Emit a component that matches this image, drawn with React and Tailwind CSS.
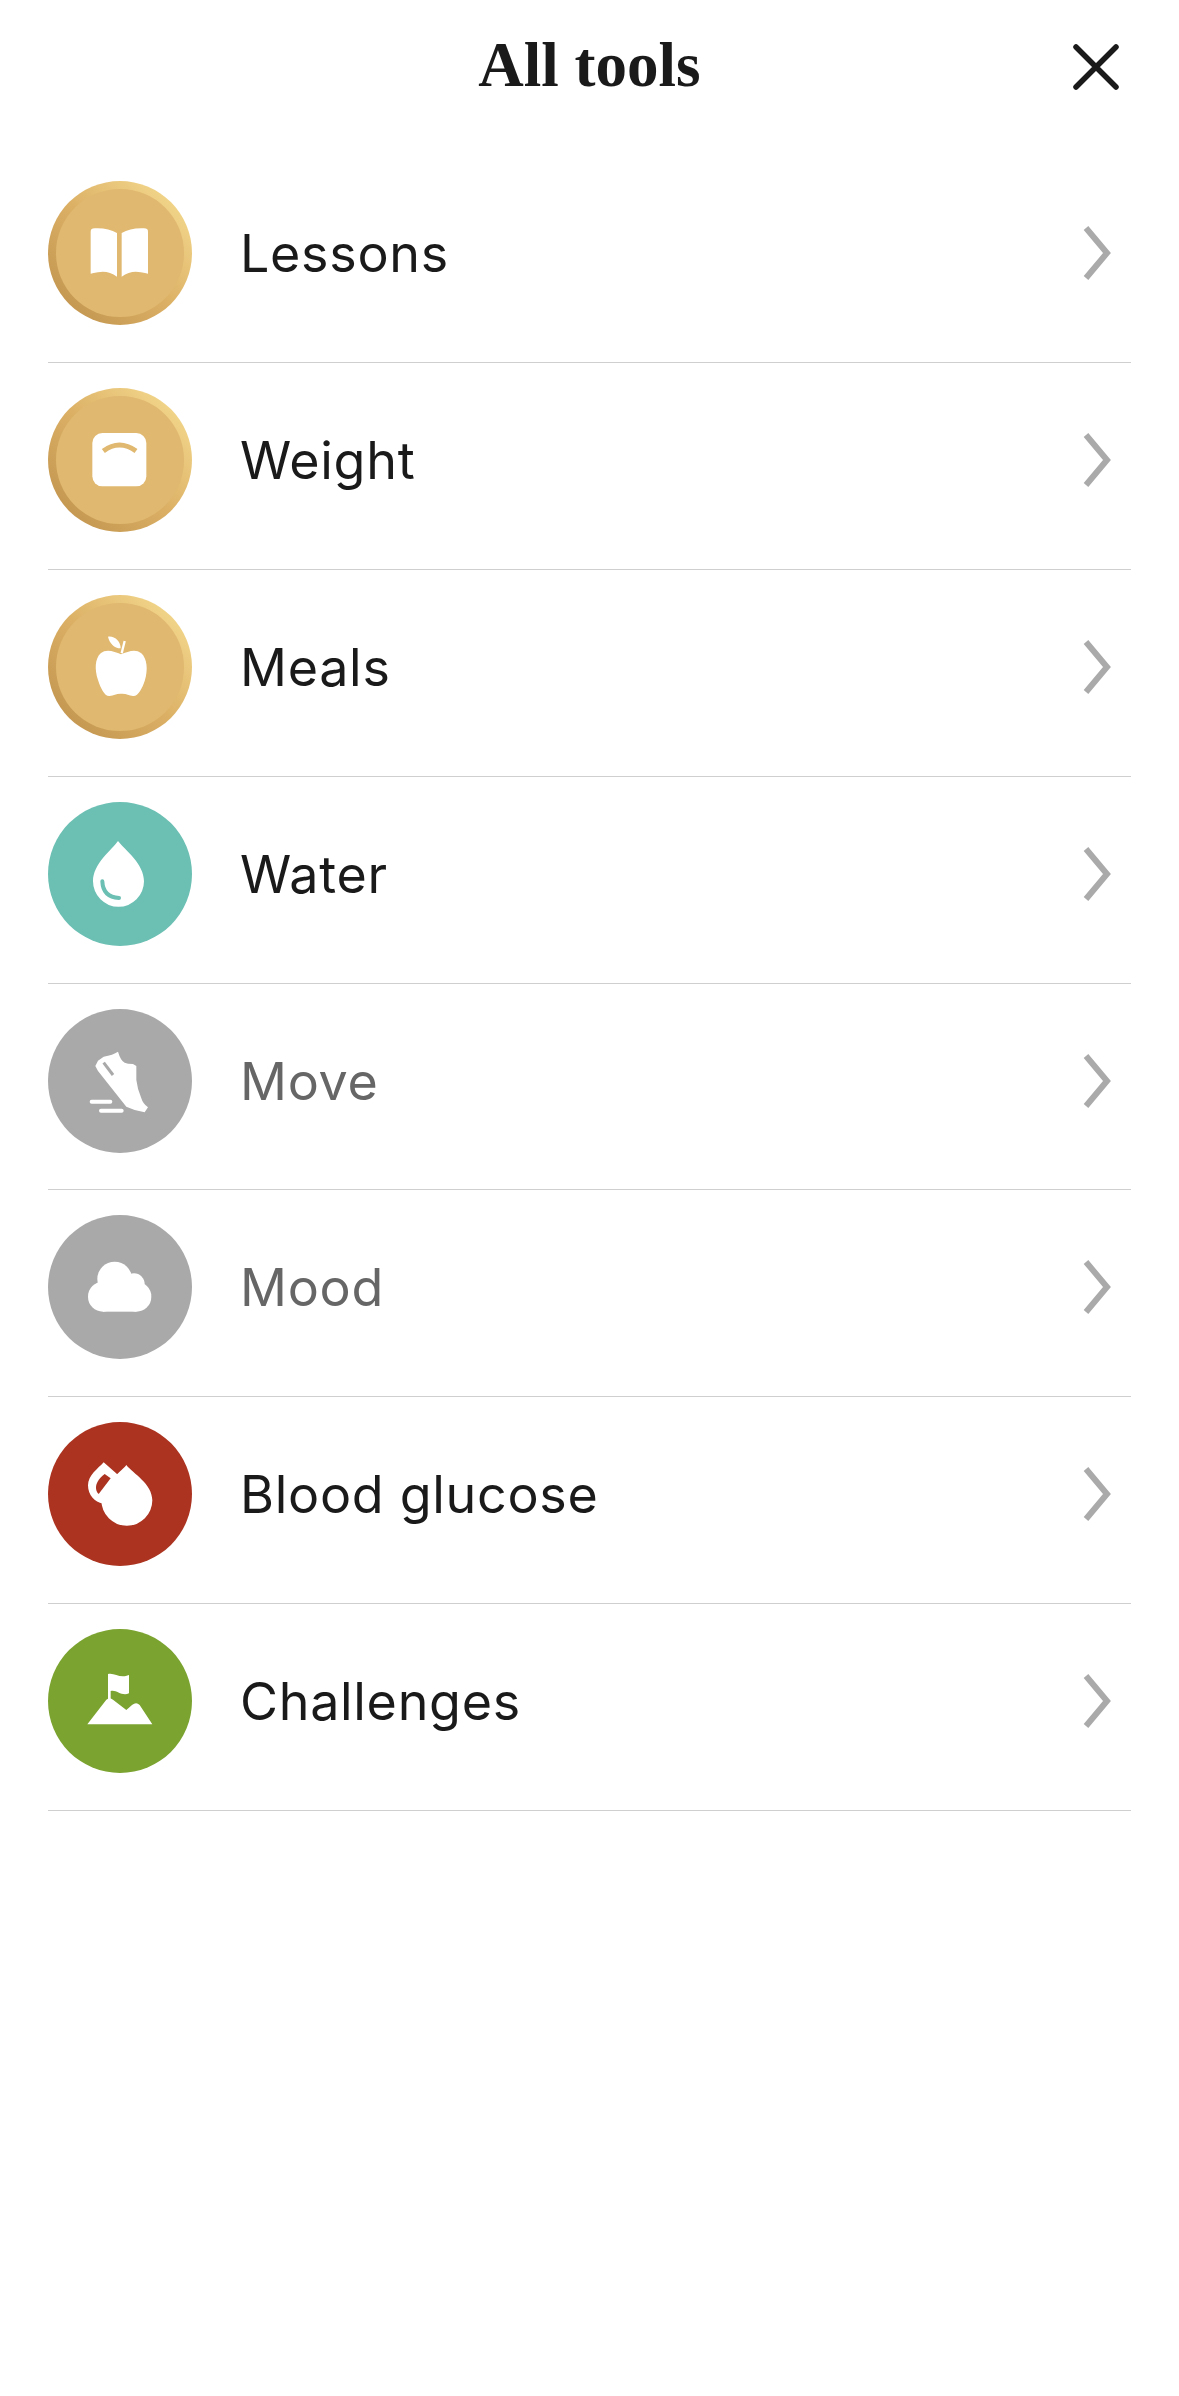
const GOLD = "#e0b86f";

// icon drawings share a 432 unit box, 3 units per pixel of the 144px circle
function BookIcon() {
  return (
    <g fill="#fff">
      <path d="M128 152 Q128 142 140 142 Q180 140 207 156 V287 Q180 268 150 274 Q135 276 128 278 Z" />
      <path d="M300 152 Q300 142 288 142 Q248 140 221 156 V287 Q248 268 278 274 Q293 276 300 278 Z" />
    </g>
  );
}

function ScaleIcon() {
  return (
    <g>
      <rect x="133" y="135" width="162" height="160" rx="30" fill="#fff" />
      <path d="M166 189 Q214 153 264 189" fill="none" stroke={GOLD} strokeWidth="15" />
    </g>
  );
}

function AppleIcon() {
  return (
    <g fill="#fff">
      <path d="M219 178 C200 170 175 160 158 175 C140 192 140 225 150 255 C158 280 170 305 185 303 C198 302 205 295 220 296 C235 295 242 302 255 303 C270 305 283 280 291 255 C300 225 298 192 280 175 C262 160 240 170 219 178 Z" />
      <path d="M180 125 C200 122 218 140 218 160 C198 160 185 145 180 125 Z" />
      <path d="M230 138 L221 175" stroke="#fff" strokeWidth="7" />
    </g>
  );
}

function DropIcon() {
  return (
    <g>
      <path d="M210 117 C190 145 135 185 135 238 A76.5 76.5 0 0 0 288 238 C288 185 232 145 210 117 Z" fill="#fff" />
      <path d="M163 238 Q165 285 213 288" fill="none" stroke="#6bbfb3" strokeWidth="12" strokeLinecap="round" />
    </g>
  );
}

function ShoeIcon() {
  return (
    <g>
      <path d="M150 155 L142 171 L150 186 L235 293 Q260 305 290 310 L300 295 Q285 285 280 268 Q268 240 265 213 L265 171 L255 165 Q238 165 230 161 Q218 155 210 128 Q195 138 167 143 Z" fill="#fff" />
      <path d="M167 161 L195 198" stroke="#a9a9a9" strokeWidth="9" />
      <path d="M131 278 H187 M159 305 H221" stroke="#fff" strokeWidth="12" strokeLinecap="round" />
    </g>
  );
}

function CloudIcon() {
  return (
    <g fill="#fff">
      <circle cx="165" cy="245" r="45" />
      <circle cx="200" cy="192" r="52" />
      <circle cx="258" cy="207" r="32" />
      <circle cx="265" cy="245" r="45" />
      <rect x="165" y="200" width="100" height="90" />
    </g>
  );
}

function GlucoseIcon() {
  return (
    <g>
      <path d="M167 121 C150 140 120 160 120 190 C120 220 140 240 165 245 L205 240 L215 170 L207 156 Z" fill="#fff" />
      <path d="M170 156 L188 169 L152 216 C140 205 138 180 170 156 Z" fill="#ab3320" />
      <path d="M235 129 C215 155 160 185 160 235 A76.5 76.5 0 0 0 313 235 C313 185 255 155 235 129 Z" fill="#fff" />
    </g>
  );
}

function FlagIcon() {
  return (
    <g fill="#fff">
      <path d="M180 135 C200 130 215 150 243 138 V193 C220 203 205 180 188 186 V212 H180 Z" />
      <path d="M118 286 L175 212 Q185 203 195 212 L235 243 L252 228 Q265 218 275 228 L313 286 Z" />
    </g>
  );
}

function IconSvg({ children }) {
  return (
    <svg viewBox="0 0 432 432" className="w-[144px] h-[144px] [grid-area:1/1]">
      {children}
    </svg>
  );
}

function ToolBadge({ gold, color, children }) {
  if (gold) {
    return (
      <div className="grid w-[144px] h-[144px] shrink-0 rounded-full bg-gradient-to-tr from-[#bd8f4a] via-[#dcb166] via-50% to-[#f9e296]">
        <div className="[grid-area:1/1] m-[8px] rounded-full bg-[#e0b86f]" />
        <IconSvg>{children}</IconSvg>
      </div>
    );
  }
  return (
    <div className={`grid w-[144px] h-[144px] shrink-0 rounded-full ${color}`}>
      <IconSvg>{children}</IconSvg>
    </div>
  );
}

const tools = [
  { label: "Lessons", gold: true, icon: <BookIcon /> },
  { label: "Weight", gold: true, icon: <ScaleIcon /> },
  { label: "Meals", gold: true, icon: <AppleIcon /> },
  { label: "Water", color: "bg-[#6bbfb3]", icon: <DropIcon /> },
  { label: "Move", color: "bg-[#a9a9a9]", muted: true, icon: <ShoeIcon /> },
  { label: "Mood", color: "bg-[#a9a9a9]", muted: true, icon: <CloudIcon /> },
  { label: "Blood glucose", color: "bg-[#ab3320]", icon: <GlucoseIcon /> },
  { label: "Challenges", color: "bg-[#7ba32f]", icon: <FlagIcon /> },
];

export default function App() {
  return (
    <div className="w-[1179px] h-[2396px] bg-white font-['Inter',sans-serif] text-[#1a1a1a]">
      {/* header */}
      <div className="grid grid-cols-[1fr_auto_1fr] items-center h-[131px] pb-[1px]">
        <div />
        <h1 className="font-['Liberation_Serif',serif] font-bold text-[63px] leading-none">All tools</h1>
        <div className="flex justify-end pr-[60px] pt-[3px]">
          <svg width="46" height="46" viewBox="0 0 46 46" fill="none" stroke="#1a1a1a" strokeWidth="5.5" strokeLinecap="round">
            <path d="M3 3 L43 43 M43 3 L3 43" />
          </svg>
        </div>
      </div>

      {/* tool list */}
      <div className="mx-[48px] pt-[25px]">
        {tools.map((tool) => (
          <div
            key={tool.label}
            className="flex items-start h-[206.875px] pt-[25px] border-b-[1.5px] border-[#cfcfcf]"
          >
            <ToolBadge gold={tool.gold} color={tool.color}>{tool.icon}</ToolBadge>
            <div className="flex items-center flex-1 h-[144px] pl-[48px] pr-[19px]">
              <span className={`flex-1 text-[52px] leading-none tracking-[0.7px] pt-[2px] ${tool.muted ? "text-[#666666]" : ""}`}>
                {tool.label}
              </span>
              <svg width="30" height="56" viewBox="0 0 30 56" fill="none" stroke="#aaaaaa" strokeWidth="6">
                <path d="M4 3 L25 28 L4 53" />
              </svg>
            </div>
          </div>
        ))}
      </div>
    </div>
  );
}
